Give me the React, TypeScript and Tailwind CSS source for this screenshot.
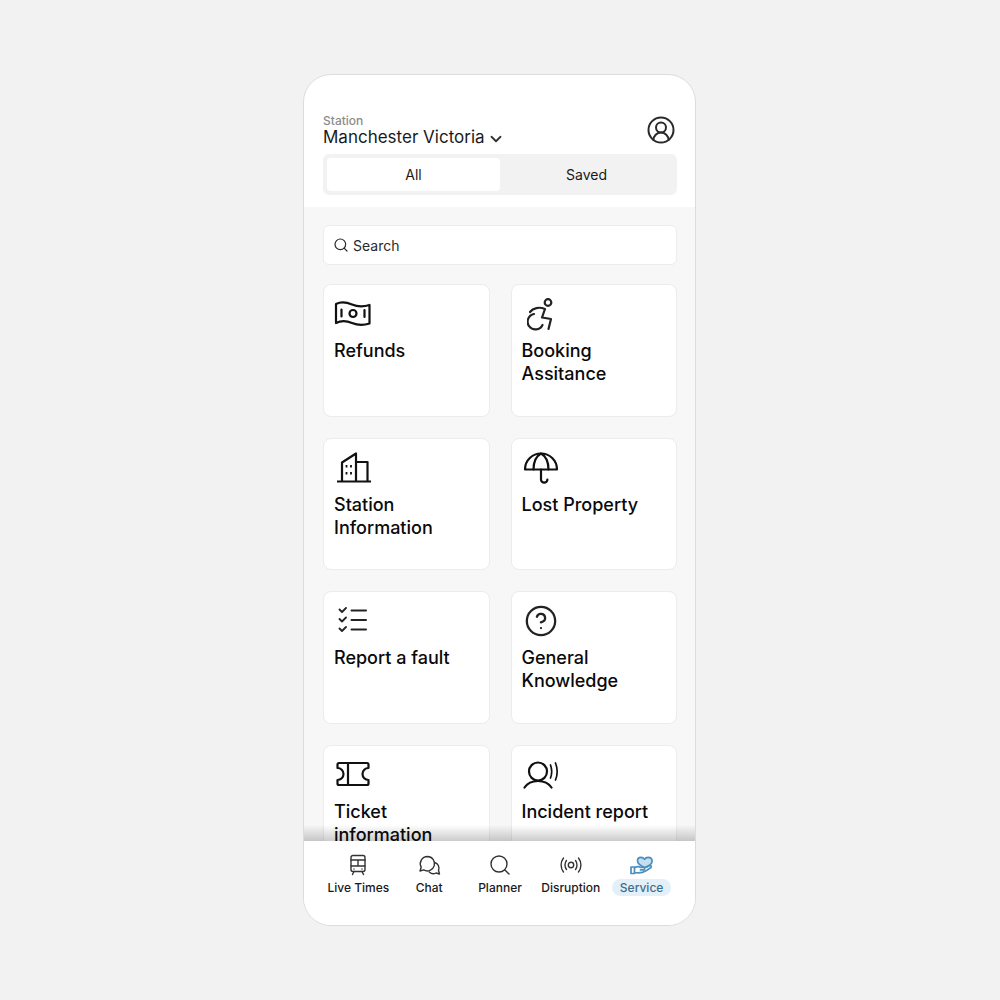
import React from "react";
import { ChevronDown, Search, CircleUserRound, CircleHelp } from "lucide-react";

const font = "font-['Inter','Liberation_Sans',sans-serif]";

const Money = () => (
  <svg width="38" height="26" viewBox="0 0 38 26" fill="none" stroke="#111" strokeWidth="2.200" strokeLinejoin="round" strokeLinecap="round">
    <path d="M2 4c5-2.500 10-2 16 .5s11 2.500 17.500.5v18.500c-6 2-11.500 2-17.500-.5S7 20.500 2 23z" />
    <circle cx="19" cy="13.500" r="3.500" />
    <path d="M7.500 9.500v7M30.500 10v7" />
  </svg>
);

const Wheelchair = () => (
  <svg width="30" height="36" viewBox="0 0 30 36" fill="none" stroke="#222" strokeWidth="2.200" strokeLinecap="round" strokeLinejoin="round">
    <circle cx="21" cy="5.500" r="3.300" />
    <path d="M3 15c3-4 9-5.500 15-3l-3 8.500 9 1.500-2.500 10" />
    <path d="M7 17a7.800 7.800 0 1 0 8.500 11" />
  </svg>
);

const Building = () => (
  <svg width="36" height="32" viewBox="0 0 36 32" fill="none" stroke="#111" strokeWidth="2.200" strokeLinejoin="round">
    <path d="M1 30.500h34" />
    <path d="M6 30V11.500L20 2.500V30" />
    <path d="M20 11h11.500v19" />
    <path d="M10.500 14v2.500M15 14v2.500M10.500 21v2.500M15 21v2.500" strokeWidth="1.800" />
  </svg>
);

const Umbrella = () => (
  <svg width="36" height="34" viewBox="0 0 36 34" fill="none" stroke="#111" strokeWidth="2.200" strokeLinecap="round" strokeLinejoin="round">
    <path d="M2 18.500C2 9 9.500 2.500 18 2.500S34 9 34 18.500z" />
    <path d="M10.500 18.500C10.500 11 13.500 5 18 2.500c4.500 2.500 7.500 8.500 7.500 16M18 18.500v10a3.200 3.200 0 0 0 6.400 0" />
  </svg>
);

const CheckList = () => (
  <svg width="30" height="26" viewBox="0 0 30 26" fill="none" stroke="#222" strokeWidth="1.800" strokeLinecap="round" strokeLinejoin="round">
    <path d="M1.500 2.500l2.500 2.500 4-4M1.500 12l2.500 2.500 4-4M1.500 21.500l2.500 2.500 4-4" />
    <path d="M13.500 3.500h14.500M13.500 13h14.500M13.500 22.500h14.500" strokeWidth="2" />
  </svg>
);

const Ticket = () => (
  <svg width="34" height="26" viewBox="0 0 34 26" fill="none" stroke="#111" strokeWidth="2.200" strokeLinejoin="round">
    <path d="M3 2h28a1.500 1.500 0 0 1 1.500 1.500v3.500a6 6 0 0 0 0 12v3.500A1.500 1.500 0 0 1 31 24H3a1.500 1.500 0 0 1-1.500-1.500V19a6 6 0 0 0 0-12V3.500A1.500 1.500 0 0 1 3 2z" />
    <path d="M12 2v22" />
  </svg>
);

const Speaker = () => (
  <svg width="36" height="28" viewBox="0 0 36 28" fill="none" stroke="#111" strokeWidth="2.200" strokeLinecap="round">
    <circle cx="15" cy="10.500" r="9" />
    <path d="M1.500 26.500c3-4.500 7.500-6.500 13.500-6.500s10.500 2 13.500 6.500" />
    <path d="M27.500 4c1.500 4 1.500 9 0 13M32.500 2c2.200 5.500 2.200 11.500 0 17" strokeWidth="1.700" />
  </svg>
);

const Train = () => (
  <svg width="18" height="22" viewBox="0 0 18 22" fill="none" stroke="#333" strokeWidth="1.400" strokeLinecap="round" strokeLinejoin="round">
    <rect x="2" y="1.500" width="14" height="16" rx="2" />
    <path d="M2 6h14M2 12h14M9 6v6M5 15h.01M13 15h.01M5 17.500l-1.500 3M13 17.500l1.500 3" />
  </svg>
);

const Chat = () => (
  <svg width="23" height="21" viewBox="0 0 23 21" fill="none" stroke="#333" strokeWidth="1.400" strokeLinecap="round" strokeLinejoin="round">
    <path d="M9.500 1.500a7.200 7.200 0 0 0-6.300 10.700L2 16l3.700-1.100A7.200 7.200 0 1 0 9.500 1.500z" />
    <path d="M16.700 7.500a5.800 5.800 0 0 1 3.800 7.800l1 3.700-3.500-1a5.800 5.800 0 0 1-6.700-1" />
  </svg>
);

const Radio = () => (
  <svg width="22" height="16" viewBox="0 0 22 16" fill="none" stroke="#333" strokeWidth="1.400" strokeLinecap="round">
    <circle cx="11" cy="8" r="2.700" />
    <path d="M6.500 3.500c-2 2.500-2 6.500 0 9M15.500 3.500c2 2.500 2 6.500 0 9M3.500 1c-3.200 4-3.200 10 0 14M18.500 1c3.200 4 3.200 10 0 14" />
  </svg>
);

const HandHeart = () => (
  <svg width="23" height="19" viewBox="0 0 23 19" fill="none" stroke="#4b8fbf" strokeWidth="1.700" strokeLinejoin="round" strokeLinecap="round">
    <path d="M14.500 11.500C10 9.500 7.500 7.500 7.500 4.800 7.500 2.800 9 1.300 11 1.300c1.400 0 2.600.6 3.500 1.900.9-1.300 2.200-1.900 3.600-1.900 2.400 0 4 1.700 4 3.900 0 2.800-2.700 4.800-7.600 6.300z" fill="#c4deef" />
    <path d="M1 11h3.500v6.500H1zM4.500 12c2-1.500 4-1.700 6-.7h3a1.200 1.200 0 0 1 0 2.600h-3M4.500 16.500c5 1 8 .5 12-2l4.500-3a1.300 1.300 0 0 0-1.500-2l-3 1.700" />
  </svg>
);

const CARDS = [
  { title: "Refunds", icon: <Money />, box: "pl-0 pt-[3px]" },
  { title: "Booking Assitance", icon: <Wheelchair />, box: "pl-[5px]" },
  { title: "Station Information", icon: <Building />, box: "pl-[2px]" },
  { title: "Lost Property", icon: <Umbrella />, box: "pl-[1px]" },
  { title: "Report a fault", icon: <CheckList />, box: "pl-[4px] pt-[3px]" },
  { title: "General Knowledge", icon: <CircleHelp size={34} strokeWidth={1.6} color="#222" />, box: "pl-[2px]" },
  { title: "Ticket information", icon: <Ticket />, box: "pl-[2px] pt-[3px]" },
  { title: "Incident report", icon: <Speaker />, box: "pl-[1px] pt-[3px]" },
];

const NAV = [
  { label: "Live Times", icon: <Train /> },
  { label: "Chat", icon: <Chat /> },
  { label: "Planner", icon: <Search size={24} strokeWidth={1.4} color="#333" /> },
  { label: "Disruption", icon: <Radio /> },
  { label: "Service", icon: <HandHeart />, active: true },
];

const App = () => {
  return (
    <div className={`${font} flex h-[1000px] w-[1000px] items-center justify-center bg-[#f2f2f2]`}>
      <div className="mr-[1px] flex h-[852px] w-[393px] flex-col overflow-hidden rounded-[28px] border border-[#dcdcdc] bg-white">
        {/* Header */}
        <div className="h-[132px] shrink-0 pt-[39px] pr-[18px] pl-[19px]">
          <div className="flex h-[40px] items-start justify-between">
            <div>
              <div className="text-[12px] leading-[14px] font-medium text-[#8c8c8c]">Station</div>
              <div className="-mt-[2px] flex items-center text-[17px] leading-[18px] text-[#1a1a1a]">
                Manchester Victoria
                <ChevronDown size={18} strokeWidth={2.4} className="mt-[4px] ml-[2px] text-[#333]" />
              </div>
            </div>
            <CircleUserRound size={30} strokeWidth={1.6} className="mt-[1px] mr-[1px] text-[#2a2a2a]" />
          </div>
          <div className="flex h-[41px] rounded-[6px] bg-[#f2f2f2] p-[4px] text-[14px] text-[#1a1a1a]">
            <div className="flex w-[173px] items-center justify-center rounded-[4px] bg-white">All</div>
            <div className="flex flex-1 items-center justify-center">Saved</div>
          </div>
        </div>

        {/* Scrolling list */}
        <div className="flex-1 overflow-hidden bg-[#f7f7f7] pt-[18px] pr-[18px] pl-[19px]">
          <div className="flex h-[40px] items-center gap-[4px] rounded-[6px] border border-[#ececec] bg-white pl-[9px] text-[14px] text-[#2a2a2a]">
            <Search size={16} strokeWidth={1.8} />
            Search
          </div>
          <div className="mt-[19px] grid grid-cols-2 gap-x-[21px] gap-y-[21px]">
            {CARDS.map((card) => (
              <div key={card.title} className="h-[132.7px] rounded-[8px] border border-[#ececec] bg-white px-[10px] pt-[12px]">
                <div className={`flex h-[38px] items-start ${card.box}`}>{card.icon}</div>
                <div className="mt-[4px] w-[130px] text-[18px] leading-[23px] font-medium text-[#0a0a0a]">{card.title}</div>
              </div>
            ))}
          </div>
        </div>

        {/* Bottom nav */}
        <div className="relative h-[84px] shrink-0 bg-white pt-[12px] pr-[18px] pl-[19px]">
          <div className="absolute inset-x-0 top-[-16px] h-[16px] bg-gradient-to-b from-transparent to-[#00000033]" />
          <div className="grid grid-cols-5">
            {NAV.map((item) => (
              <div key={item.label} className="flex flex-col items-center">
                <div className="flex h-[24px] items-center justify-center">{item.icon}</div>
                <div className={`mt-[2px] rounded-full px-[8px] text-[12px] leading-[17px] font-medium whitespace-nowrap ${item.active ? "bg-[#e3f0f9] text-[#3d6d90]" : "text-[#1a1a1a]"}`}>
                  {item.label}
                </div>
              </div>
            ))}
          </div>
        </div>
      </div>
    </div>
  );
};

export default App;
